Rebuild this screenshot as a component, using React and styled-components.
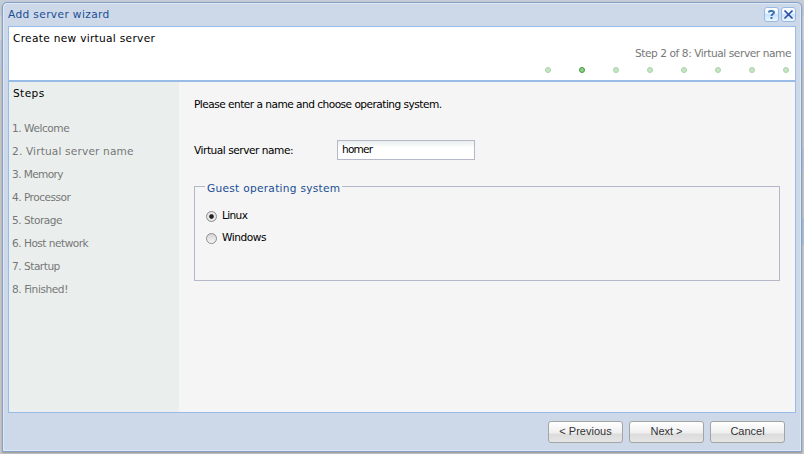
import React, { useState } from "react";
import styled, { createGlobalStyle } from "styled-components";

const Global = createGlobalStyle`
  * { box-sizing: border-box; }
  html, body { margin: 0; width: 804px; height: 454px; overflow: hidden; }
  body { background: #c8c9cc; font-family: "DejaVu Sans", sans-serif; font-size: 10.6px; color: #000; }
`;

const Backdrop = styled.div`
  display: flex;
  width: 804px;
  height: 454px;
  padding: 2px 1px 2px 2px;
  background:
    linear-gradient(transparent 149px, #b9c3d2 149px 172px, #c4c4c4 172px 218px, #aebfd4 218px 245px, transparent 245px) right / 3px 100% no-repeat,
    linear-gradient(#c4ccd8 0 16px, #d0d5dc 16px 40px, #c0cbdc 40px 68px, #c8c8c8 68px);
`;

const Window = styled.section`
  display: flex;
  flex-direction: column;
  width: 800px;
  height: 450px;
  padding: 0 5px;
  border: 1px solid #84a0c4;
  border-radius: 5px 5px 0 0;
  background: #cdd9e8;
  box-shadow: inset 1px 1px #dfe8f6, inset -1px -1px #dfe8f6, 0 1px 2px #999;
`;

const TitleBar = styled.header`
  display: flex;
  align-items: center;
  justify-content: space-between;
  flex: none;
  height: 23px;
`;

const Text = styled.span`
  display: block;
  padding-bottom: 2px;
  line-height: 12px;
  white-space: nowrap;
  letter-spacing: ${(p) => p.$track || 0}px;
  color: ${(p) => p.$color || "#000"};
`;

const Tools = styled.div`
  display: flex;
  gap: 2px;
  height: 15px;
`;

const Tool = styled.button`
  width: 15px;
  height: 15px;
  padding: 0;
  border: 1px solid #96b9e8;
  border-radius: 3px;
  background: linear-gradient(#fff, #e4f1ff 45%, #cae3ff 50%, #edf7ff);
  svg { display: block; }
`;

const Frame = styled.main`
  display: flex;
  flex-direction: column;
  width: 788px;
  height: 387px;
  border: 1px solid #99bbe8;
`;

const Banner = styled.div`
  height: 55px;
  padding: 5px 4px 0;
  background: #fff;
  border-bottom: 2px solid #99bbe8;
  flex: none;
`;

const Progress = styled.div`
  display: flex;
  flex-direction: column;
  align-items: flex-end;
  margin-top: 1px;
`;

const Dots = styled.div`
  display: flex;
  gap: 28px;
  margin: 6px 2px 0 0;
`;

const Dot = styled.i`
  width: 6px;
  height: 6px;
  border-radius: 50%;
  border: 1px solid ${(p) => (p.$on ? "#429a42" : "#a9d2a7")};
  background: ${(p) => (p.$on ? "#8bd086" : "#c5e6c3")};
`;

const Body = styled.div`
  display: flex;
  flex: 1;
`;

const Sidebar = styled.nav`
  width: 170px;
  padding: 5px 3px;
  background: #eaefee;
`;

const SidebarTitle = styled(Text)`
  padding-left: 1px;
`;

const StepList = styled.ol`
  list-style: none;
  margin: 17px 0 0;
  padding: 0;
`;

const Step = styled.li`
  height: 23px;
  padding-top: 4px;
`;

const Form = styled.form`
  flex: 1;
  padding: 16px 15px;
  background: #f5f5f5;
`;

const Field = styled.label`
  display: flex;
  align-items: center;
  height: 20px;
  margin-top: 28px;
`;

const FieldLabel = styled(Text)`
  width: 143px;
  padding-bottom: 0;
`;

const Input = styled.input`
  width: 138px;
  height: 20px;
  padding: 0 4px 2px;
  border: 1px solid #b5b8c8;
  outline: none;
  background: linear-gradient(#e9eeef, #fff 7px);
  font: 10.6px "DejaVu Sans", sans-serif;
  letter-spacing: -0.8px;
`;

const Group = styled.fieldset`
  width: 586px;
  height: 105px;
  margin: 16px 0 0;
  padding: 9px 11px;
  border: 1px solid #b5b8c8;
`;

const Legend = styled.legend`
  margin-left: -1px;
  padding: 6px 2px 0;
`;

const Option = styled.label`
  display: flex;
  align-items: center;
  gap: 5px;
  height: 22px;
`;

const Radio = styled.input`
  appearance: none;
  width: 11px;
  height: 11px;
  margin: 0;
  border: 1px solid #8c8c8c;
  border-radius: 50%;
  background: linear-gradient(#d4d4d4, #f6f6f6);
  &:checked { background: radial-gradient(circle at 50% 50%, #222 0 1.8px, #e6e6e6 2.8px); }
`;

const Footer = styled.footer`
  display: flex;
  justify-content: flex-end;
  gap: 6px;
  padding: 8px 11px 0 0;
`;

const Button = styled.button`
  width: 75px;
  height: 22px;
  padding: 0 0 2px;
  border: 1px solid #a4a4a4;
  border-radius: 3px;
  background: linear-gradient(#fff, #efefef 11px, #dcdcdc 12px, #e5e5e5);
  font: 11px "Liberation Sans", Arial, sans-serif;
  color: #333;
`;

const steps = [
  ["Welcome", -0.47], ["Virtual server name", 0.15], ["Memory", -0.62], ["Processor", -0.52],
  ["Storage", -0.48], ["Host network", -0.52], ["Startup", -0.5], ["Finished!", -0.43],
];

const systems = [["Linux", -0.65], ["Windows", -0.47]];

export default function App() {
  const [os, setOs] = useState("Linux");
  const [name, setName] = useState("homer");
  return (
    <Backdrop>
      <Global />
      <Window>
        <TitleBar>
          <Text $color="#204d94" $track={0.37}>Add server wizard</Text>
          <Tools>
            <Tool aria-label="Help">
              <svg width="13" height="13" fill="none" stroke="#4274ac" strokeWidth="2">
                <path d="M4 4.5V4C4 2.8 5 3 6.5 3S9 3 9 4.5 6.5 6 6.5 8M6.5 9v2" />
              </svg>
            </Tool>
            <Tool aria-label="Close">
              <svg width="13" height="13" stroke="#2848a0" strokeWidth="1.6">
                <path d="M2.5 2.5l8 8M10.5 2.5l-8 8" />
              </svg>
            </Tool>
          </Tools>
        </TitleBar>
        <Frame>
          <Banner>
            <Text $track={0.3}>Create new virtual server</Text>
            <Progress>
              <Text $color="#777" $track={-0.43}>Step 2 of 8: Virtual server name</Text>
              <Dots>{steps.map(([s], i) => <Dot key={s} $on={i === 1} />)}</Dots>
            </Progress>
          </Banner>
          <Body>
            <Sidebar>
              <SidebarTitle $track={0.4}>Steps</SidebarTitle>
              <StepList>
                {steps.map(([label, track], i) => (
                  <Step key={label}>
                    <Text $color="#777" $track={track}>{i + 1}. {label}</Text>
                  </Step>
                ))}
              </StepList>
            </Sidebar>
            <Form onSubmit={(e) => e.preventDefault()}>
              <Text $track={-0.53}>Please enter a name and choose operating system.</Text>
              <Field>
                <FieldLabel $track={-0.47}>Virtual server name:</FieldLabel>
                <Input value={name} onChange={(e) => setName(e.target.value)} />
              </Field>
              <Group>
                <Legend><Text $color="#204d94" $track={0.28}>Guest operating system</Text></Legend>
                {systems.map(([o, track]) => (
                  <Option key={o}>
                    <Radio type="radio" name="os" checked={os === o} onChange={() => setOs(o)} />
                    <Text $track={track}>{o}</Text>
                  </Option>
                ))}
              </Group>
            </Form>
          </Body>
        </Frame>
        <Footer>
          <Button>&lt; Previous</Button>
          <Button>Next &gt;</Button>
          <Button>Cancel</Button>
        </Footer>
      </Window>
    </Backdrop>
  );
}
